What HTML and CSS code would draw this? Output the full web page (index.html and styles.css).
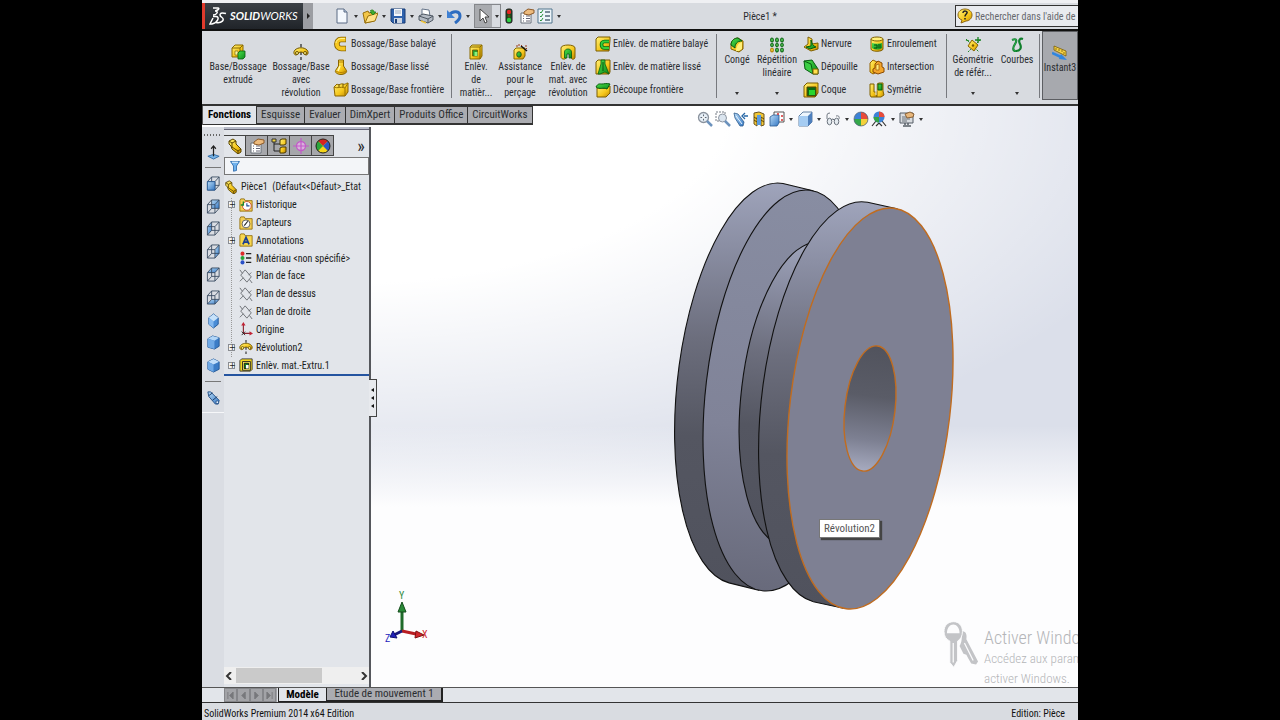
FILE: index.html
```html
<!DOCTYPE html>
<html lang="fr">
<head>
<meta charset="utf-8">
<title>SolidWorks - Pièce1</title>
<link rel="stylesheet" href="styles.css">
</head>
<body>
<svg class="defs" aria-hidden="true">
  <defs>
    <linearGradient id="gold" x1="0" y1="0" x2="1" y2="1"><stop offset="0" stop-color="#fff27a"/><stop offset=".6" stop-color="#f5c518"/><stop offset="1" stop-color="#b98405"/></linearGradient>
    <linearGradient id="blue" x1="0" y1="0" x2="1" y2="1"><stop offset="0" stop-color="#b9dcf7"/><stop offset="1" stop-color="#3477c4"/></linearGradient>
    <linearGradient id="green" x1="0" y1="0" x2="1" y2="1"><stop offset="0" stop-color="#4be04b"/><stop offset="1" stop-color="#0d8a1c"/></linearGradient>
  </defs>
  <symbol id="i-extrude" viewBox="0 0 16 16"><path d="M2 4l3-3h8v9l-3 3H2z" fill="url(#gold)" stroke="#8a6a00"/><path d="M2 4h8v9M10 4l3-3" fill="none" stroke="#8a6a00"/><path d="M5 7h3v4H5z" fill="#fff7a0" stroke="#6d5a00" stroke-width=".6"/><path d="M8 9l2-2h5v6l-2 2H8z" fill="url(#green)" stroke="#075d10" stroke-width=".8"/></symbol>
  <symbol id="i-revolve" viewBox="0 0 16 16"><path d="M8 0v3M8 13v3M8 5v6" stroke="#222" stroke-width="1.2"/><path d="M2 6c3-3 9-3 12 0 2 2 1 5-1 5s-2-3-5-3-3 3-5 3S0 8 2 6z" fill="url(#gold)" stroke="#6d5200"/><circle cx="4" cy="9" r="1.5" fill="#fff48a" stroke="#6d5200"/><circle cx="12" cy="9" r="1.5" fill="#fff48a" stroke="#6d5200"/></symbol>
  <symbol id="i-sweep" viewBox="0 0 16 16"><path d="M13 3.500H8c-5.500 0-5.500 9 0 9h5" fill="none" stroke="#8a6500" stroke-width="5.600"/><path d="M12.500 3.500H8c-5.500 0-5.500 9 0 9h4.500" fill="none" stroke="#f7c71f" stroke-width="3.800"/><path d="M12 2.500H8C5 2.500 3 5 3 7" fill="none" stroke="#fff08a"/></symbol>
  <symbol id="i-loft" viewBox="0 0 16 16"><path d="M5.500 1h5v6l3 4.500c1 2.500-3 4-5.500 4s-6.500-1.500-5.500-4l3-4.500z" fill="url(#gold)" stroke="#8a6500"/><path d="M6 3h4M3 12c2 2 8 2 10 0" fill="none" stroke="#b98200"/><path d="M7 7l-2 5" stroke="#fff9b5" stroke-width="1.500"/></symbol>
  <symbol id="i-boundary" viewBox="0 0 16 16"><path d="M1 5l3-3c2 2 4-1 6 0s3-1 5-1v9l-3 4H2z" fill="url(#gold)" stroke="#8a6500"/><path d="M1 5c4 2 6-1 11 1l3-5M12 6v8" fill="none" stroke="#9b7400"/><path d="M6 2v3M10 2v3" stroke="#6d5200"/></symbol>
  <symbol id="i-cut" viewBox="0 0 16 16"><path d="M2 3l2-2h10v11l-2 3H2z" fill="url(#gold)" stroke="#8a6a00"/><path d="M2 3h10v12M12 3l2-2" fill="none" stroke="#8a6a00"/><path d="M4.500 6h5v6h-5z" fill="#2a9c2f" stroke="#6f5700" stroke-width=".8"/><path d="M6.500 8h3v4h-3z" fill="#8cf07c"/></symbol>
  <symbol id="i-hole" viewBox="0 0 16 16"><path d="M2 6l2-2h9v8l-2 3H2z" fill="url(#gold)" stroke="#8a6a00"/><ellipse cx="7" cy="10.500" rx="2.300" ry="2.800" fill="url(#green)" stroke="#2c3d10" stroke-width=".8"/><path d="M9 2l6 5" stroke="#111" stroke-width="1.600"/><path d="M7 0v2M4 2h2M10 1l-1 1M13 2h2M14 4l1 1" stroke="#9a3b1a"/></symbol>
  <symbol id="i-cutrev" viewBox="0 0 16 16"><path d="M1 4c0-4 14-4 14 0v9c0 3-4 3-4 0V9H6v5c-1 2-5 1-5-1z" fill="url(#gold)" stroke="#806000"/><path d="M4.500 14V8c0-4 7-4 7 0v6H9v-4H7v4z" fill="url(#green)" stroke="#075d10" stroke-width=".8"/></symbol>
  <symbol id="i-cutsweep" viewBox="0 0 16 16"><path d="M1 3l2-2h12v3l-1 11H1z" fill="url(#gold)" stroke="#7a5c00"/><path d="M14 5.500H9.500c-4 0-4 6.500 0 6.500H14" fill="none" stroke="#08660f" stroke-width="3.600"/><path d="M14 5.500H9.500c-4 0-4 6.500 0 6.500H14" fill="none" stroke="#35cf3a" stroke-width="1.800"/></symbol>
  <symbol id="i-cutloft" viewBox="0 0 16 16"><path d="M1 3l2-2h12v12l-1 2H1z" fill="url(#gold)" stroke="#7a5c00"/><path d="M6 1h4v4l4 10-4-2-5 2H3l3-10z" fill="url(#green)" stroke="#075d10" stroke-width=".8"/><path d="M8 3v9" stroke="#08570f"/></symbol>
  <symbol id="i-cutbound" viewBox="0 0 16 16"><path d="M2 6h9l4-2v7l-4 4H2z" fill="url(#gold)" stroke="#7a5c00"/><path d="M1 5c2-4 4-3 6-3s4-1 8 0l-3 5c-4-2-7 1-11-2z" fill="url(#green)" stroke="#075d10"/></symbol>
  <symbol id="i-fillet" viewBox="0 0 16 16"><path d="M2 8c0-5 4-7 7-7l5 3v8l-4 3-8-3z" fill="url(#gold)" stroke="#806000"/><path d="M2 8c0-5 4-7 7-7l4 3C8 4 6 7 6 11z" fill="url(#green)" stroke="#075d10"/><path d="M7 14c0-4 2-8 6-9v7l-3 2z" fill="#fff07a"/></symbol>
  <symbol id="i-pattern" viewBox="0 0 16 16"><g fill="#6fe06a" stroke="#0a6413" stroke-width="1.200"><ellipse cx="3" cy="3" rx="1.300" ry="2"/><ellipse cx="8" cy="3" rx="1.300" ry="2"/><ellipse cx="13" cy="3" rx="1.300" ry="2"/><ellipse cx="3" cy="8" rx="1.300" ry="1.500"/><ellipse cx="8" cy="8" rx="1.300" ry="1.500"/><ellipse cx="13" cy="8" rx="1.300" ry="1.500"/><ellipse cx="8" cy="13" rx="1.300" ry="2"/><ellipse cx="13" cy="13" rx="1.300" ry="2"/></g><ellipse cx="3" cy="13" rx="1.300" ry="2" fill="#ffe14a" stroke="#b07c00" stroke-width="1.200"/></symbol>
  <symbol id="i-rib" viewBox="0 0 16 16"><path d="M5 1l4 2v5l6-1v6l-7 2-7-4 4-3z" fill="url(#gold)" stroke="#806000"/><path d="M8 4v6l-5 1 4 2 6-2c-3-1-4-3-5-7z" fill="url(#green)" stroke="#075d10"/></symbol>
  <symbol id="i-draft" viewBox="0 0 16 16"><path d="M1 2l8-1 6 9v5h-5z" fill="url(#green)" stroke="#075d10"/><path d="M1 2l7 3 2 10-8-5z" fill="#3ccf45" stroke="#075d10"/><path d="M10 10h5v5h-5z" fill="#ffe14d" stroke="#806000"/></symbol>
  <symbol id="i-shell" viewBox="0 0 16 16"><path d="M1 4l3-3h11v10l-3 4H1z" fill="url(#gold)" stroke="#7a5c00"/><path d="M4 5h9v9H4z" fill="#086b12" stroke="#5b4500"/><path d="M6 8h6v5H6z" fill="#28d52f"/></symbol>
  <symbol id="i-wrap" viewBox="0 0 16 16"><path d="M2 3v10c0 3 12 3 12 0V3" fill="url(#gold)" stroke="#806000"/><ellipse cx="8" cy="3" rx="6" ry="2" fill="#fff07a" stroke="#806000"/><path d="M3 7c3 1 7 1 10 0v5c-3 2-7 2-10 0z" fill="url(#green)"/><path d="M5 9h3v3H5M9 9h3M9 11h3" fill="none" stroke="#064f0d"/></symbol>
  <symbol id="i-intersect" viewBox="0 0 16 16"><path d="M1 4l3-3 4 2v10l-4 2-3-2z" fill="url(#gold)" stroke="#956000"/><path d="M6 5l3-3 4 2v4l2 1v4l-6 2-5-2v-3l2-1z" fill="#f3a52c" stroke="#8a4a00"/><path d="M7 6l3-1v6H7z" fill="#ffe77c" stroke="#9b5c00" stroke-width=".7"/></symbol>
  <symbol id="i-mirror" viewBox="0 0 16 16"><path d="M1 2h4v8h3v5H2l-1-2z" fill="url(#gold)" stroke="#806000"/><path d="M8 2l2-1h4v8l1 4-3 2H8z" fill="url(#gold)" stroke="#806000"/><path d="M9 2h4v6H9z" fill="url(#green)" stroke="#075d10"/><path d="M7 0v13" stroke="#eee"/></symbol>
  <symbol id="i-refgeo" viewBox="0 0 16 16"><path d="M1 2l13 13M3 15L15 3" stroke="#238a2a" stroke-dasharray="2 1"/><path d="M7 3l6 5-4 6-6-5z" fill="url(#gold)" stroke="#8a6500"/><circle cx="8" cy="8.500" r="1.200" fill="#7a5b00"/><path d="M13 0v6M10 3h6M1 3l3 1" stroke="#16831f" stroke-width="1.300"/></symbol>
  <symbol id="i-curves" viewBox="0 0 16 16"><path d="M3 3c5-2 5 1 3 4s-3 7 1 7 6-3 4-7 0-6 3-5" fill="none" stroke="#0f7f2c" stroke-width="2.200"/><path d="M3 3c5-2 5 1 3 4s-3 7 1 7" fill="none" stroke="#36b455" stroke-width=".8"/></symbol>
  <symbol id="i-instant" viewBox="0 0 16 16"><path d="M2 1l12 5v5L2 5z" fill="#f6d44a" stroke="#7a5c00" stroke-width=".8"/><path d="M4 3v2M7 4v2M10 5v2M12 7v2" stroke="#7a5c00" stroke-width=".8"/><path d="M0 8l9 4" stroke="#2f86e0" stroke-width="2.500"/><path d="M9 9l6 6-8-1z" fill="#2f86e0"/></symbol>
  <symbol id="i-new" viewBox="0 0 16 16"><path d="M3 1h7l3 3v11H3z" fill="#f4f8fd" stroke="#5a6b84"/><path d="M10 1v3h3" fill="#b9cbe2" stroke="#5a6b84"/></symbol>
  <symbol id="i-open" viewBox="0 0 16 16"><path d="M1 5l5-2 1 2 5-1v9l-9 2z" fill="#f3c648" stroke="#98700c"/><path d="M3 15L6 8l10-3-3 8z" fill="#ffe28a" stroke="#98700c"/><path d="M8 3c2-2 4-1 4 1h2l-3 3-3-3h2" fill="#3fae2f" stroke="#1b7414" stroke-width=".7"/></symbol>
  <symbol id="i-save" viewBox="0 0 16 16"><path d="M1 1h14v14H3l-2-2z" fill="#2f62ad" stroke="#163a75"/><path d="M4 1h8v7H4z" fill="#f4f7fb"/><path d="M5 3h6M5 5h6" stroke="#9caabd"/><path d="M4 10h8v5H4z" fill="#cdd6e2"/><path d="M5 11h2v4H5z" fill="#1d3f78"/></symbol>
  <symbol id="i-print" viewBox="0 0 16 16"><path d="M4 1l7 1 1 6-8-1z" fill="#fff" stroke="#66758a"/><path d="M1 8l4-2 10 2v4l-5 3-9-3z" fill="#b3bac4" stroke="#4f5863"/><path d="M1 8l9 3 5-3M10 11v4" fill="none" stroke="#4f5863"/><path d="M3 13l5 2" stroke="#efc43b" stroke-width="1.500"/></symbol>
  <symbol id="i-undo" viewBox="0 0 16 16"><path d="M3 7c4-5 11-4 11 1 0 3-2 5-5 7" fill="none" stroke="#2d6cc0" stroke-width="3"/><path d="M1 2v8h8z" fill="#3e80d3"/></symbol>
  <symbol id="i-arrow" viewBox="0 0 16 16"><path d="M5 1v12l3-3 2 5 2-1-2-5h4z" fill="#fff" stroke="#444"/></symbol>
  <symbol id="i-light" viewBox="0 0 16 16"><rect x="5" y="1" width="6" height="14" rx="2" fill="#174a1e" stroke="#222"/><circle cx="8" cy="4" r="2.200" fill="#e72424"/><circle cx="8" cy="8" r="1.500" fill="#5c4a12"/><circle cx="8" cy="12" r="2.200" fill="#30cf45"/></symbol>
  <symbol id="i-props" viewBox="0 0 16 16"><path d="M2 5h10v10H2z" fill="#fff" stroke="#68707b"/><path d="M4 8h1M7 8h4M4 10.500h1M7 10.500h4M4 13h1M7 13h4" stroke="#667"/><path d="M5 4l4-3 6 1v3l-5 2-5-1z" fill="#edbb7d" stroke="#8c5a2a"/></symbol>
  <symbol id="i-options" viewBox="0 0 16 16"><path d="M1 1h14v14H1z" fill="#edf5fa" stroke="#51748d"/><path d="M3 4l1 1 2-3M3 8l1 1 2-3M3 12l1 1 2-3" fill="none" stroke="#268f38"/><path d="M8 4h5M8 8h5M8 12h5" stroke="#536879" stroke-width="1.500"/></symbol>
  <symbol id="i-help" viewBox="0 0 16 16"><path d="M8 1c4 0 7 2.500 7 6s-3 6-6 6l-5 2 1-3c-3-1-4-3-4-5 0-3.500 3-6 7-6z" fill="url(#gold)" stroke="#8d6510"/><path d="M6 5c0-3 5-2 4 0-.500 1-2 1.500-2 3.500M8 10v1.500" fill="none" stroke="#222" stroke-width="1.500"/></symbol>
  <symbol id="i-zoomfit" viewBox="0 0 16 16"><circle cx="6.500" cy="6.500" r="5" fill="#e4edf5" stroke="#8a929d" stroke-width="1.300"/><path d="M10 10l5 5" stroke="#6d93bd" stroke-width="2.500"/><path d="M6.500 3.500v6M3.500 6.500h6" stroke="#5c6673"/><circle cx="6.500" cy="6.500" r="1.300" fill="#fff"/></symbol>
  <symbol id="i-zoomarea" viewBox="0 0 16 16"><path d="M1 1h9v9H1z" fill="none" stroke="#777d86" stroke-dasharray="2 1"/><circle cx="7.500" cy="7" r="4" fill="#dbe5ef" stroke="#8f97a2"/><path d="M10 10l5 5" stroke="#6d93bd" stroke-width="2.500"/></symbol>
  <symbol id="i-prev" viewBox="0 0 16 16"><path d="M1 2l4 1 6 8-1 4-3 0-5-8z" fill="url(#blue)" stroke="#2d5c8d" stroke-width=".8"/><path d="M3 5l6 8" stroke="#eaf6ff"/><path d="M15 5h-4M12 2L9 5l3 3" fill="none" stroke="#2465a5" stroke-width="1.300"/></symbol>
  <symbol id="i-section" viewBox="0 0 16 16"><path d="M3 2l5-1 5 2v11l-3 1V6H6v9l-3-2z" fill="#f2c735" stroke="#6a5520"/><path d="M6 4h4v10H6z" fill="#5a9be0"/><path d="M3 6l3 2M3 9l3 2M10 6l3 2M10 9l3 2" stroke="#5d4500"/></symbol>
  <symbol id="i-orient" viewBox="0 0 16 16"><path d="M5 1h10v10H5z" fill="#fff" stroke="#444" stroke-width=".9"/><path d="M1 6l3-2h6v8l-2 3H1z" fill="url(#blue)" stroke="#28588f" stroke-width=".8"/><path d="M8 3h2M12 5h2M12 9h2" stroke="#d33030" stroke-width="1.500"/></symbol>
  <symbol id="i-display" viewBox="0 0 16 16"><path d="M2 5l4-4h9v10l-4 4H2z" fill="#eef6fd" stroke="#54749a" stroke-width=".9"/><path d="M2 5h9v10H2z" fill="#a5ccf2"/><path d="M11 5l4-4v10l-4 4z" fill="#4d7fbd"/></symbol>
  <symbol id="i-glasses" viewBox="0 0 16 16"><path d="M2 8V4q0-2 3-2M14 8q1-4-3-3" fill="none" stroke="#737b84"/><ellipse cx="4.500" cy="10.500" rx="2.300" ry="3.300" fill="#e5ebf0" stroke="#6a727c"/><ellipse cx="11.500" cy="10.500" rx="2.300" ry="3.300" fill="#e5ebf0" stroke="#6a727c"/><path d="M6.500 9q1-2 3 0" fill="none" stroke="#59616b"/></symbol>
  <symbol id="i-ball" viewBox="0 0 16 16"><circle cx="8" cy="8" r="7" fill="#3c82d6"/><path d="M8 8V1a7 7 0 0 1 7 7z" fill="#e84b3a"/><path d="M8 8h7a7 7 0 0 1-7 7z" fill="#f3d13a"/><path d="M8 8v7a7 7 0 0 1-7-7z" fill="#34a84a"/><circle cx="8" cy="8" r="7" fill="none" stroke="#596270" stroke-width=".7"/></symbol>
  <symbol id="i-apptab" viewBox="0 0 16 16"><circle cx="8" cy="8" r="7" fill="#f5d519"/><path d="M8 8L3 3a7 7 0 0 1 10 0z" fill="#d52222"/><path d="M8 8L3 3a7 7 0 0 0 0 10z" fill="#2ca63b"/><path d="M8 8l5-5a7 7 0 0 1 0 10z" fill="#2b56c4"/><circle cx="8" cy="8" r="7" fill="none" stroke="#222"/></symbol>
  <symbol id="i-scene" viewBox="0 0 16 16"><path d="M1 15l4-5h6l4 5M5 15l3-3 3 3" fill="none" stroke="#333" stroke-width="1.200"/><circle cx="8" cy="6" r="5.500" fill="#3c82d6"/><path d="M8 6V.500A5.500 5.500 0 0 1 13.500 6z" fill="#e84b3a"/><path d="M2.500 6A5.500 5.500 0 0 0 8 11.500V6z" fill="#35a444"/></symbol>
  <symbol id="i-viewset" viewBox="0 0 16 16"><path d="M1 2h13v10H1z" fill="#d9dce0" stroke="#555d66"/><path d="M3 6h8M3 8h8M3 10h5" stroke="#687078"/><path d="M6 3l5-2 4 2-1 3-6 1z" fill="#e8b77c" stroke="#8a6136"/><path d="M6 12v2M9 12v2M4 15h8" stroke="#555d66" stroke-width="1.500"/></symbol>
  <symbol id="i-part" viewBox="0 0 16 16"><path d="M2 3l4-2 3 2v3l5 5v3l-3 2-6-5-1-3-2-2z" fill="url(#gold)" stroke="#5c4700"/><path d="M2 3l3 2 4-2M5 5v4l6 4 3-2M11 13v3" fill="none" stroke="#5c4700"/></symbol>
  <symbol id="i-config" viewBox="0 0 16 16"><path d="M3 2v11h6M3 6h6" fill="none" stroke="#222"/><path d="M1 1h4v3H1z" fill="#f2d33a" stroke="#333"/><path d="M9 2l2-1h4v5l-2 1H9zM9 10l2-1h4v5l-2 1H9z" fill="url(#gold)" stroke="#4b3a00"/></symbol>
  <symbol id="i-target" viewBox="0 0 16 16"><circle cx="8" cy="8" r="4.500" fill="#d9b0dc" stroke="#c25bc8" stroke-width="1.300"/><path d="M8 0v16M0 8h16" stroke="#c25bc8" stroke-width="1.200"/></symbol>
  <symbol id="i-filter" viewBox="0 0 16 16"><path d="M2 2h12l-4 6v6l-4 1V8z" fill="#6fb1ec" stroke="#1f5fa4"/><path d="M4 3h8" stroke="#d8efff" stroke-width="1.500"/></symbol>
  <symbol id="i-history" viewBox="0 0 16 16"><path d="M1 3l1-2h4l1 2h8v12H1z" fill="#f4cf55" stroke="#93700f"/><circle cx="9" cy="9" r="5" fill="#fff" stroke="#c5462c"/><path d="M9 6v3h3" fill="none" stroke="#234b96" stroke-width="1.300"/><path d="M5 4v4H2" fill="none" stroke="#1b8a2f" stroke-width="1.500"/></symbol>
  <symbol id="i-sensor" viewBox="0 0 16 16"><path d="M1 3l1-2h4l1 2h8v12H1z" fill="#f4cf55" stroke="#93700f"/><circle cx="8" cy="9" r="4.500" fill="#fff" stroke="#555"/><path d="M6 11l4-5" stroke="#222" stroke-width="1.300"/></symbol>
  <symbol id="i-annot" viewBox="0 0 16 16"><path d="M1 3l1-2h4l1 2h8v12H1z" fill="#f7d64e" stroke="#93700f"/><path d="M4.500 13L8 5l3.500 8M6 10.500h4" fill="none" stroke="#1b3f93" stroke-width="2"/></symbol>
  <symbol id="i-material" viewBox="0 0 16 16"><circle cx="4" cy="3" r="2.300" fill="#dd2b2b"/><circle cx="4" cy="8" r="2.300" fill="#25a236"/><circle cx="4" cy="13" r="2.300" fill="#2950c8"/><path d="M8 3h6M8 8h6M8 13h6" stroke="#222" stroke-width="1.600"/></symbol>
  <symbol id="i-plane" viewBox="0 0 16 16"><path d="M7 1l7 8-5 6-7-8zM1 1l3 4M12 12l3 4M14 4l-3 3M5 10l-4 4" fill="none" stroke="#55595e" stroke-width=".9"/></symbol>
  <symbol id="i-origin" viewBox="0 0 16 16"><path d="M5 13V3M5 13h8" stroke="#8b2330" stroke-width="1.300"/><path d="M5 0L2.500 4h5zM16 13l-4-2.500v5z" fill="#c22335"/><path d="M3 11l4 4M7 11l-4 4" stroke="#222"/></symbol>
  <symbol id="i-cutnode" viewBox="0 0 16 16"><path d="M1 3l2-2h12v12l-2 2H1z" fill="#f2d81e" stroke="#333"/><path d="M4 4h9v10H4z" fill="#f8e95f" stroke="#222"/><path d="M6 6h5v6H6z" fill="#118321" stroke="#111"/><path d="M8 8h3v4H8z" fill="#fff"/></symbol>
  <symbol id="i-normal" viewBox="0 0 16 16"><path d="M2 12l6-2 6 2-6 3z" fill="#78b4e8" stroke="#2f6ca8"/><path d="M8 12V1M5.500 4L8 1l2.500 3" fill="none" stroke="#222" stroke-width="1.300"/></symbol>
  <symbol id="wire" viewBox="0 0 16 16"><path d="M1.500 6h8v9h-8zM6 1h8v9H6zM1.500 6L6 1M9.500 6L14 1M9.500 15l4.500-5M1.500 15L6 10" fill="none" stroke="#34465c" stroke-width=".9"/></symbol>
  <symbol id="c-front" viewBox="0 0 16 16"><use href="#wire"/><path d="M1.500 6h8v9h-8z" fill="url(#blue)" stroke="#2d5f9b"/></symbol>
  <symbol id="c-back" viewBox="0 0 16 16"><path d="M6 1h8v9H6z" fill="url(#blue)"/><use href="#wire"/></symbol>
  <symbol id="c-left" viewBox="0 0 16 16"><path d="M1.500 6L6 1v9l-4.500 5z" fill="url(#blue)"/><use href="#wire"/></symbol>
  <symbol id="c-right" viewBox="0 0 16 16"><path d="M9.500 6L14 1v9l-4.500 5z" fill="url(#blue)"/><use href="#wire"/></symbol>
  <symbol id="c-top" viewBox="0 0 16 16"><path d="M1.500 6L6 1h8L9.500 6z" fill="url(#blue)"/><use href="#wire"/></symbol>
  <symbol id="c-bottom" viewBox="0 0 16 16"><path d="M1.500 15L6 10h8l-4.500 5z" fill="url(#blue)"/><use href="#wire"/></symbol>
  <symbol id="c-iso" viewBox="0 0 16 16"><path d="M8 1l5 4v7l-5 4-5-4V5z" fill="#4b8dd6" stroke="#235998"/><path d="M8 1l5 4-5 4-5-4z" fill="#c7e2fa"/><path d="M3 5l5 4v7l-5-4z" fill="#86baf0"/></symbol>
  <symbol id="c-dim" viewBox="0 0 16 16"><path d="M2 4l5-3 7 2v9l-5 3-7-2z" fill="#3b7cc6" stroke="#235998"/><path d="M2 4l5-3 7 2-5 3z" fill="#b3d6f7"/><path d="M2 4l7 2v9l-7-2z" fill="#6fa9e6"/></symbol>
  <symbol id="c-tri" viewBox="0 0 16 16"><path d="M2 4l6-3 6 3v8l-6 3-6-3z" fill="#3b7cc6" stroke="#235998"/><path d="M2 4l6-3 6 3-6 3z" fill="#c2dffa"/><path d="M2 4l6 3v8l-6-3z" fill="#6fa9e6"/></symbol>
  <symbol id="i-spy" viewBox="0 0 16 16"><path d="M2 2l3 0 9 9-1 4-3 0-7-8z" fill="url(#blue)" stroke="#234f86"/><path d="M3 6l4-3M7 11l5-4" stroke="#173a66"/><circle cx="12" cy="13" r="1.500" fill="#e9f5ff" stroke="#234f86"/></symbol>
</svg>

<main class="app">
  <header class="titlebar">
    <div class="brand">
      <svg class="ds" viewBox="0 0 18 20" aria-hidden="true"><path d="M4 2h5c2 0 0 3-3 3 4 0 2 4-2 4M4 10.500h3c4 0 2 6-4 7.500H1l3-6M17 7.500c-7-2-7 2-4 4s0 6-6 5" fill="none" stroke="#fff" stroke-width="1.500"/></svg>
      <span class="wordmark"><b>SOLID</b>WORKS</span>
    </div>
    <button class="brand-more" aria-label="Menu"><i></i></button>
    <nav class="quick" aria-label="Accès rapide">
      <button aria-label="Nouveau"><svg><use href="#i-new"/></svg><i class="arr"></i></button>
      <button aria-label="Ouvrir"><svg><use href="#i-open"/></svg><i class="arr"></i></button>
      <button aria-label="Enregistrer"><svg><use href="#i-save"/></svg><i class="arr"></i></button>
      <button aria-label="Imprimer"><svg><use href="#i-print"/></svg><i class="arr"></i></button>
      <button aria-label="Annuler"><svg><use href="#i-undo"/></svg><i class="arr"></i></button>
      <button class="picked" aria-label="Sélectionner"><svg><use href="#i-arrow"/></svg><i class="arr"></i></button>
      <button class="solo" aria-label="Reconstruire"><svg><use href="#i-light"/></svg></button>
      <button class="solo" aria-label="Propriétés"><svg><use href="#i-props"/></svg></button>
      <button aria-label="Options"><svg><use href="#i-options"/></svg><i class="arr"></i></button>
    </nav>
    <h1>Pièce1 *</h1>
    <label class="search"><svg><use href="#i-help"/></svg><input type="text" aria-label="Recherche" placeholder="Rechercher dans l'aide de"></label>
  </header>

  <section class="ribbon">
    <button class="big w64"><svg><use href="#i-extrude"/></svg><span>Base/Bossage<br>extrudé</span></button>
    <button class="big w62"><svg><use href="#i-revolve"/></svg><span>Bossage/Base<br>avec<br>révolution</span></button>
    <div class="stack w117">
      <button><svg><use href="#i-sweep"/></svg>Bossage/Base balayé</button>
      <button><svg><use href="#i-loft"/></svg>Bossage/Base lissé</button>
      <button><svg><use href="#i-boundary"/></svg>Bossage/Base frontière</button>
    </div>
    <hr>
    <button class="big w44"><svg><use href="#i-cut"/></svg><span>Enlèv.<br>de<br>matièr...</span></button>
    <button class="big w44"><svg><use href="#i-hole"/></svg><span>Assistance<br>pour le<br>perçage</span></button>
    <button class="big w52"><svg><use href="#i-cutrev"/></svg><span>Enlèv. de<br>mat. avec<br>révolution</span></button>
    <div class="stack w120">
      <button><svg><use href="#i-cutsweep"/></svg>Enlèv. de matière balayé</button>
      <button><svg><use href="#i-cutloft"/></svg>Enlèv. de matière lissé</button>
      <button><svg><use href="#i-cutbound"/></svg>Découpe frontière</button>
    </div>
    <hr>
    <button class="big drop w36"><svg><use href="#i-fillet"/></svg><span>Congé</span><i class="arr"></i></button>
    <button class="big drop w44"><svg><use href="#i-pattern"/></svg><span>Répétition<br>linéaire</span><i class="arr"></i></button>
    <div class="stack w66 inset">
      <button><svg><use href="#i-rib"/></svg>Nervure</button>
      <button><svg><use href="#i-draft"/></svg>Dépouille</button>
      <button><svg><use href="#i-shell"/></svg>Coque</button>
    </div>
    <div class="stack w79 inset">
      <button><svg><use href="#i-wrap"/></svg>Enroulement</button>
      <button><svg><use href="#i-intersect"/></svg>Intersection</button>
      <button><svg><use href="#i-mirror"/></svg>Symétrie</button>
    </div>
    <hr>
    <button class="big drop w48"><svg><use href="#i-refgeo"/></svg><span>Géométrie<br>de référ...</span><i class="arr"></i></button>
    <button class="big drop w40"><svg><use href="#i-curves"/></svg><span>Courbes</span><i class="arr"></i></button>
    <hr>
    <button class="big instant"><svg><use href="#i-instant"/></svg><span>Instant3</span></button>
  </section>

  <section class="work">
    <svg class="part" viewBox="670 178 288 436" aria-label="Poulie">
      <defs>
        <linearGradient id="side" x1="0" y1="0" x2="0" y2="1"><stop offset="0" stop-color="#9fa4bb"/><stop offset=".15" stop-color="#8b8fa4"/><stop offset=".38" stop-color="#6c6e7d"/><stop offset=".62" stop-color="#545661"/><stop offset="1" stop-color="#50525d"/></linearGradient>
        <linearGradient id="rear" x1="0" y1="0" x2="0" y2="1"><stop offset="0" stop-color="#888da2"/><stop offset=".6" stop-color="#808398"/><stop offset="1" stop-color="#686a7b"/></linearGradient>
        <linearGradient id="hole" x1="0" y1="0" x2="0" y2="1"><stop offset="0" stop-color="#51535d"/><stop offset=".4" stop-color="#5a5c67"/><stop offset=".75" stop-color="#7d8092"/><stop offset="1" stop-color="#a7abc0"/></linearGradient>
      </defs>
      <g stroke="#111" stroke-width="1.100">
        <path fill="url(#side)" d="M813 190.800L783 183.500A80.100 201.700 6.770 0 0 729 582.900L759 590.200z"/>
        <ellipse cx="786" cy="390.500" rx="80.100" ry="201.700" transform="rotate(6.770 786 390.500)" fill="url(#rear)"/>
        <ellipse cx="802" cy="394" rx="60.600" ry="152.700" transform="rotate(6.770 802 394)" fill="url(#side)"/>
        <path fill="url(#side)" d="M897 208.800L867.600 202.300A80.100 201.700 6.770 0 0 813.400 601.700L843 608.200z"/>
      </g>
      <g stroke="#c06c20" stroke-width="1.400">
        <ellipse cx="870" cy="408.500" rx="80.100" ry="201.700" transform="rotate(6.770 870 408.500)" fill="#7e8093"/>
        <ellipse cx="870" cy="408.500" rx="25.100" ry="63" transform="rotate(6.770 870 408.500)" fill="url(#hole)"/>
      </g>
    </svg>
    <div class="tooltip" role="tooltip">Révolution2</div>
    <svg class="triad" viewBox="0 0 46 58" aria-label="Repère">
      <path d="M19 41V18" stroke="#1f6b2a" stroke-width="3"/><path d="M19 12l4 10h-8z" fill="#2a8a38" stroke="#154d1c"/>
      <path d="M19 41l14 3" stroke="#b81d22" stroke-width="3"/><path d="M41 45l-8-4-1 7z" fill="#d2262b" stroke="#7d1114"/>
      <path d="M19 41l-8 4" stroke="#18187d" stroke-width="3"/><path d="M7 47l3-6 4 7z" fill="#2020bb" stroke="#111170"/>
      <text x="16" y="9" fill="#2f8a3c">Y</text><text x="39" y="48" fill="#d02a2e">X</text><text x="2" y="52" fill="#2222bb">Z</text>
    </svg>
    <div class="watermark">
      <svg viewBox="0 0 36 48" aria-hidden="true"><g fill="#c3c4c7"><path d="M18 10c4-1 6 3 5 8l12 23-2 3-5-1-3-5-2-4-3-1-4-8c2-3 3-9 2-16z"/><path stroke="#fcfcfd" d="M10 0c5 0 9 4 9 10 0 5-2 8-5 10v20l-4 7-4-5V20C2 18 0 15 0 10 0 4 4 0 10 0z"/></g><path d="M3 12c0-12 13-12 13 0z" fill="#fcfcfd"/><path d="M9.500 22v20M21 22l9 18" stroke="#fcfcfd" stroke-width="1.300"/></svg>
      <p><strong>Activer Windo</strong>Accédez aux param<br>activer Windows.</p>
    </div>

    <div class="top">
      <nav class="tabs">
        <button class="on">Fonctions</button><button>Esquisse</button><button>Evaluer</button><button>DimXpert</button><button>Produits Office</button><button>CircuitWorks</button>
      </nav>
      <div class="hud">
        <button aria-label="Zoom au mieux"><svg><use href="#i-zoomfit"/></svg></button>
        <button aria-label="Zoom fenêtre"><svg><use href="#i-zoomarea"/></svg></button>
        <button aria-label="Vue précédente"><svg><use href="#i-prev"/></svg></button>
        <button aria-label="Vue en coupe"><svg><use href="#i-section"/></svg></button>
        <button aria-label="Orientation"><svg><use href="#i-orient"/></svg><i class="arr"></i></button>
        <button aria-label="Affichage"><svg><use href="#i-display"/></svg><i class="arr"></i></button>
        <button aria-label="Masquer"><svg><use href="#i-glasses"/></svg><i class="arr"></i></button>
        <button aria-label="Apparence"><svg><use href="#i-ball"/></svg></button>
        <button aria-label="Scène"><svg><use href="#i-scene"/></svg><i class="arr"></i></button>
        <button aria-label="Paramètres"><svg><use href="#i-viewset"/></svg><i class="arr"></i></button>
      </div>
    </div>

    <div class="panes">
      <aside class="rail">
        <span class="grip"></span>
        <button aria-label="Normal à"><svg><use href="#i-normal"/></svg></button>
        <hr>
        <div class="views">
          <button aria-label="Face"><svg><use href="#c-front"/></svg></button>
          <button aria-label="Arrière"><svg><use href="#c-back"/></svg></button>
          <button aria-label="Gauche"><svg><use href="#c-left"/></svg></button>
          <button aria-label="Droite"><svg><use href="#c-right"/></svg></button>
          <button aria-label="Dessus"><svg><use href="#c-top"/></svg></button>
          <button aria-label="Dessous"><svg><use href="#c-bottom"/></svg></button>
          <button aria-label="Isométrique"><svg><use href="#c-iso"/></svg></button>
          <button aria-label="Dimétrique"><svg><use href="#c-dim"/></svg></button>
          <button aria-label="Trimétrique"><svg><use href="#c-tri"/></svg></button>
        </div>
        <hr>
        <button aria-label="Orientation de vue"><svg><use href="#i-spy"/></svg></button>
        <hr class="pale">
      </aside>
      <aside class="panel">
        <div class="ptabs">
          <button class="on" aria-label="Arbre"><svg><use href="#i-part"/></svg></button>
          <button aria-label="Propriétés"><svg><use href="#i-props"/></svg></button>
          <button aria-label="Configurations"><svg><use href="#i-config"/></svg></button>
          <button aria-label="DimXpert"><svg><use href="#i-target"/></svg></button>
          <button aria-label="Apparences"><svg><use href="#i-apptab"/></svg></button>
          <button class="more">»</button>
        </div>
        <label class="filter"><svg><use href="#i-filter"/></svg><input type="text" aria-label="Filtre"></label>
        <ul class="tree">
          <li class="root"><svg><use href="#i-part"/></svg>Pièce1&nbsp; (Défaut&lt;&lt;Défaut&gt;_Etat</li>
          <li><button>+</button><svg><use href="#i-history"/></svg>Historique</li>
          <li><svg><use href="#i-sensor"/></svg>Capteurs</li>
          <li><button>+</button><svg><use href="#i-annot"/></svg>Annotations</li>
          <li><svg><use href="#i-material"/></svg>Matériau &lt;non spécifié&gt;</li>
          <li><svg><use href="#i-plane"/></svg>Plan de face</li>
          <li><svg><use href="#i-plane"/></svg>Plan de dessus</li>
          <li><svg><use href="#i-plane"/></svg>Plan de droite</li>
          <li><svg><use href="#i-origin"/></svg>Origine</li>
          <li><button>+</button><svg><use href="#i-revolve"/></svg>Révolution2</li>
          <li><button>+</button><svg><use href="#i-cutnode"/></svg>Enlèv. mat.-Extru.1</li>
        </ul>
        <div class="hscroll"><svg viewBox="0 0 8 8"><path d="M6 0L2 4l4 4"/></svg><span></span><svg viewBox="0 0 8 8"><path d="M2 0l4 4-4 4"/></svg></div>
        <button class="handle" aria-label="Réduire"><i></i><i></i><i></i></button>
      </aside>
    </div>
  </section>

  <nav class="sheets">
    <div class="steps">
      <button aria-label="Premier"><svg viewBox="0 0 8 8"><path d="M1 0v8M7 0L3 4l4 4z"/></svg></button><button aria-label="Précédent"><svg viewBox="0 0 8 8"><path d="M6 0L2 4l4 4z"/></svg></button><button aria-label="Suivant"><svg viewBox="0 0 8 8"><path d="M2 0l4 4-4 4z"/></svg></button><button aria-label="Dernier"><svg viewBox="0 0 8 8"><path d="M7 0v8M1 0l4 4-4 4z"/></svg></button>
    </div>
    <button class="sheet on">Modèle</button><button class="sheet">Etude de mouvement 1</button>
  </nav>
  <footer class="status"><span>SolidWorks Premium 2014 x64 Edition</span><span>Edition: Pièce</span></footer>
</main>
</body>
</html>
```
FILE: styles.css
```css
* { box-sizing: border-box; }
body { margin: 0; background: #000; color: #2a2c30; font: 10px/13px "Roboto Condensed", Roboto, sans-serif; }
button, input { font: inherit; color: inherit; border: 0; padding: 0; margin: 0; background: none; }
button { white-space: nowrap; }
svg { display: block; width: 16px; height: 16px; flex: none; }
.defs { position: absolute; width: 0; height: 0; }
.app { display: flex; flex-direction: column; min-height: 100vh; margin: 0 202px; overflow: hidden; background: #dadde2; }
.arr { width: 0; height: 0; border: 2px solid transparent; border-top: 3px solid #333; border-bottom: 0; }

.titlebar { display: flex; align-items: center; height: 31px; border-top: 3px solid #eff0f3; border-bottom: 2px solid #111; background: #d8dbe0; }
.brand { display: flex; align-items: center; gap: 3px; align-self: stretch; width: 101px; padding-left: 4px; border-left: 3px solid #e03a2c; background: linear-gradient(#3b4046, #202429); color: #fff; }
.ds { width: 18px; height: 20px; }
.wordmark { font: italic 11px/14px Lato, sans-serif; }
.brand-more { display: grid; place-items: center; align-self: stretch; width: 10px; background: #9b9da2; }
.brand-more i { border: 3px solid transparent; border-left-color: #222; border-right: 0; }
.quick { display: flex; align-items: center; margin-left: 21px; }
.quick button { display: flex; align-items: center; gap: 4px; width: 28px; height: 24px; }
.quick .picked { width: 27px; gap: 4px; border: 1px solid #85878b; background: linear-gradient(to right, #a9abaf 17px, #d8dbe0 17px); }
.quick .solo { width: 18px; }
.titlebar h1 { flex: 1; margin: 0; font: inherit; text-align: center; }
.search { display: flex; align-items: center; gap: 2px; width: 123px; height: 22px; padding-left: 1px; border: 1px solid #333; border-right: 0; background: #e9ebef; }
.search input { flex: 1; min-width: 0; }
.search input::placeholder { color: #66686d; opacity: 1; }

.ribbon { display: flex; height: 75px; padding-left: 4px; border-bottom: 2px solid #333; background: #d8dbe0; }
.ribbon hr { flex: none; width: 1px; height: 64px; margin: 3px 2px; border: 0; background: #77797e; }
.big { display: flex; flex-direction: column; align-items: center; flex: none; padding-top: 13px; }
.big.drop { position: relative; padding-top: 6px; }
.drop .arr { position: absolute; bottom: 9px; }
.stack { display: grid; grid-template-rows: repeat(3, 23px); align-content: start; flex: none; padding: 1px 0 0 1px; }
.stack.inset { padding-left: 4px; }
.stack button { display: flex; align-items: center; gap: 2px; text-align: left; }
.w36 { width: 36px; } .w40 { width: 40px; } .w44 { width: 44px; } .w48 { width: 48px; } .w52 { width: 52px; } .w62 { width: 62px; } .w64 { width: 64px; } .w66 { width: 66px; } .w79 { width: 79px; } .w117 { width: 117px; } .w120 { width: 120px; }
.instant { flex: 1; height: 69px; border: 1px solid #5c5e62; background: #a7a9ae; }

.work { position: relative; flex: 1; display: flex; flex-direction: column; background: linear-gradient(to bottom, rgba(253,253,254,0) 55%, #fdfdfe 69%), radial-gradient(100% 68% at 15% 0%, #fff 45%, rgba(255,255,255,0) 100%), #dbdfea; }
.top { display: flex; align-items: flex-start; position: relative; }
.tabs { display: flex; height: 19px; padding-left: 1px; background: #555; font-size: 11px; }
.tabs button { padding: 0 4px 2px; border: solid #333; border-width: 1px 1px 2px 0; background: #abacb1; }
.tabs .on { padding: 0 5px 2px; border-width: 0 1px 1px 0; background: #e1e4e9; color: #000; font-weight: bold; }
.hud { display: flex; flex: 1; justify-content: center; padding: 5px 0 0 12px; }
.hud button { display: flex; align-items: center; gap: 4px; padding: 0 1px; }
.hud .arr { margin-right: 2px; }

.panes { display: flex; flex: 1; position: relative; width: 169px; }
.rail { width: 22px; background: #dadde3; display: flex; flex-direction: column; align-items: center; }
.rail button { display: grid; place-items: center; min-height: 22px; }
.grip { width: 18px; height: 2px; margin: 7px 0 5px; background: repeating-linear-gradient(to right, #666 0 1px, transparent 1px 3px); }
.rail hr { width: 16px; height: 1px; margin: 4px 0; border: 0; background: #777; }
.views { display: grid; grid-template-rows: repeat(9, 1fr); height: 205px; }
.rail hr.pale { width: 22px; background: #f6f7f9; }
.rail svg { width: 15px; height: 17px; }
.panel { position: relative; flex: 1; min-width: 0; display: flex; flex-direction: column; padding-top: 8px; border-right: 2px solid #55575c; background: linear-gradient(#b8bcc9 2px, #667 2px 3px, #e2e5ea 3px); }
.ptabs { display: flex; height: 21px; }
.ptabs button { display: grid; place-items: center; width: 22px; border: 1px solid #444; border-left: 0; background: #a6a7ab; }
.ptabs .on { border-bottom: 0; background: #e2e5ea; }
.ptabs .more { margin-left: auto; width: 16px; border: 0; background: none; font-size: 18px; }
.filter { display: flex; align-items: center; height: 18px; margin-top: 1px; padding-left: 4px; border: 1px solid #777; background: #f3f5f8; }
.filter svg { width: 12px; height: 12px; }
.filter input { flex: 1; min-width: 0; }
.tree { display: grid; grid-template-rows: repeat(11, 1fr); height: 198px; margin: 3px 0 0; padding: 0; list-style: none; border-bottom: 2px solid #2454a0; overflow: hidden; color: #1c1e22; background: repeating-linear-gradient(#999 0 1px, transparent 1px 2px) 7px 20px / 1px 160px no-repeat; }
.tree li { display: flex; align-items: center; gap: 3px; padding-left: 15px; position: relative; white-space: nowrap; }
.tree .root { padding-left: 0; }
.tree svg { width: 14px; height: 14px; }
.tree button { position: absolute; left: 4px; width: 7px; height: 7px; border: 1px solid #8a8d92; background: #f4f5f7; font: 8px/5px "DejaVu Sans", sans-serif; }
.hscroll { display: flex; align-items: center; height: 17px; margin-top: auto; margin-bottom: 3px; padding: 0 1px; background: #efefef; }
.hscroll svg { width: 8px; height: 8px; fill: none; stroke: #333; stroke-width: 2; }
.hscroll span { flex: 0 1 86px; height: 15px; margin: 0 auto 0 3px; background: #cacaca; }
.handle { position: absolute; right: -8px; top: 252px; width: 8px; height: 38px; border: 1px solid #444; border-left: 0; background: #e8eaee; display: grid; place-content: center; gap: 4px; }
.handle i { border: 2px solid transparent; border-right: 3px solid #111; border-left: 0; }

.part { position: absolute; left: 468px; top: 72px; width: 288px; height: 436px; }
.tooltip { position: absolute; left: 617px; top: 413px; padding: 2px 4px; border: 1px solid #777; background: #fff; color: #555; font-size: 11px; box-shadow: 2px 2px 1px #444; }
.triad { position: absolute; left: 181px; top: 484px; width: 46px; height: 58px; }
.watermark { position: absolute; left: 742px; top: 515px; display: flex; gap: 5px; color: #b4b5b8; white-space: nowrap; font-weight: 300; }
.watermark svg { width: 35px; height: 48px; }
.watermark p { margin: 6px 0 0; font-size: 13px; line-height: 20px; }
.watermark strong { display: block; font-size: 18px; font-weight: 300; line-height: 22px; }

.sheets { display: flex; height: 15px; padding-left: 22px; border-top: 1px solid #555; background: #e2e5ea; position: relative; font-size: 11px; }
.steps { display: flex; width: 53px; margin-right: 1px; background: #a2a3a7; }
.steps button { display: grid; place-items: center; width: 13px; border: 1px solid #85868a; }
.steps svg { width: 7px; height: 7px; fill: #77787c; stroke: #77787c; }
.sheet { width: 116px; border: 1px solid #222; border-width: 0 2px 2px 0; background: #abacb1; line-height: 12px; }
.sheet.on { width: 49px; border-width: 0 1px 1px; background: #e2e5ea; color: #000; font-weight: bold; }
.status { display: flex; justify-content: space-between; align-items: center; height: 18px; padding: 3px 13px 0 2px; border-top: 1px solid #333; background: #d9dce1; color: #111; }
```
